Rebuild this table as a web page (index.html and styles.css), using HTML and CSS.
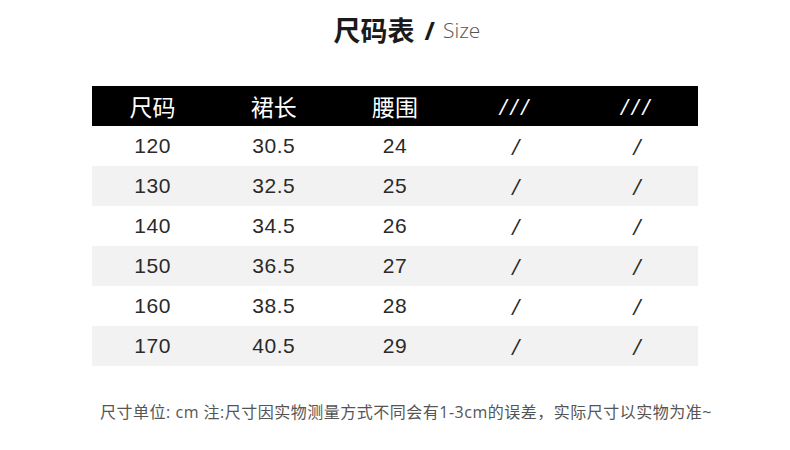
FILE: index.html
```
<!DOCTYPE html>
<html lang="zh">
<head>
<meta charset="utf-8">
<link rel="stylesheet" href="styles.css">
</head>
<body>
<div class="page">
  <h1 class="title"><span class="cn">尺码表</span><span class="slash">/</span><span class="en">Size</span></h1>
  <div class="table">
    <div class="row head"><div>尺码</div><div>裙长</div><div>腰围</div><div class="sl">///</div><div class="sl">///</div></div>
    <div class="row"><div>120</div><div>30.5</div><div>24</div><div class="sl">/</div><div class="sl">/</div></div>
    <div class="row alt"><div>130</div><div>32.5</div><div>25</div><div class="sl">/</div><div class="sl">/</div></div>
    <div class="row"><div>140</div><div>34.5</div><div>26</div><div class="sl">/</div><div class="sl">/</div></div>
    <div class="row alt"><div>150</div><div>36.5</div><div>27</div><div class="sl">/</div><div class="sl">/</div></div>
    <div class="row"><div>160</div><div>38.5</div><div>28</div><div class="sl">/</div><div class="sl">/</div></div>
    <div class="row alt"><div>170</div><div>40.5</div><div>29</div><div class="sl">/</div><div class="sl">/</div></div>
  </div>
  <p class="note">尺寸单位: cm 注:尺寸因实物测量方式不同会有1-3cm的误差，实际尺寸以实物为准~</p>
</div>
</body>
</html>
```
FILE: styles.css
```
html, body { margin: 0; padding: 0; background: #fff; }
.page { width: 790px; height: 450px; overflow: hidden; font-family: "Liberation Sans", "Noto Sans CJK SC", sans-serif; }
.title { margin: 0; height: 59px; display: flex; justify-content: center; align-items: center; gap: 10px; font-weight: normal; padding-left: 24px; box-sizing: border-box; }
.title .cn { font-family: "Noto Sans CJK SC", sans-serif; font-weight: 700; font-size: 27px; color: #1a1a1a; }
.title .slash { font-family: "Noto Sans", sans-serif; font-weight: 700; font-size: 25px; color: #1a1a1a; }
.title .en { font-family: "Open Sans", sans-serif; font-weight: 300; font-size: 21px; color: #555; margin-left: -2px; }
.table { margin: 27px 0 0 92px; width: 606px; }
.row { display: grid; grid-template-columns: repeat(5, 1fr); height: 40px; align-items: center; text-align: center; font-size: 21px; color: #2a2a2a; letter-spacing: 0.5px; }
.row.alt { background: #f2f2f2; }
.row.head { background: #000; color: #fff; font-family: "Noto Sans CJK SC", sans-serif; font-size: 23px; letter-spacing: 0; }
.row .sl { font-family: "DejaVu Sans", sans-serif; font-style: italic; font-size: 20px; }
.row.head .sl { letter-spacing: 4px; font-weight: 300; }
.note { margin: 33px 0 0 0; padding-left: 22px; text-align: center; font-family: "Open Sans", "Noto Sans CJK SC", sans-serif; font-size: 16px; letter-spacing: 0.5px; color: #555; }
```
